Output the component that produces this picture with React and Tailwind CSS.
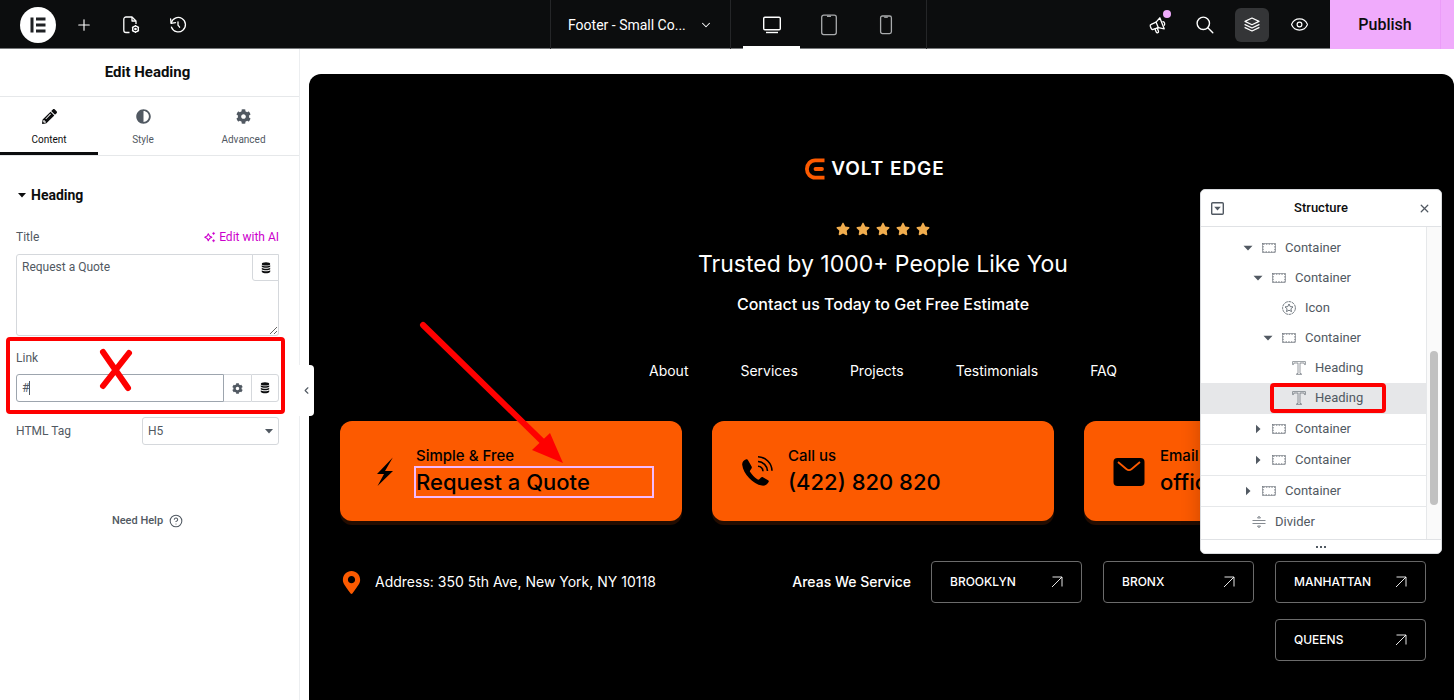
// ============================================
// Editor shell - top bar, widget panel, canvas and structure navigator
// ============================================

import { ChevronDown, ChevronLeft, CircleHelp, Eye, Plus, X } from 'lucide-react';
import { FaAdjust, FaCog, FaMapMarkerAlt, FaPencilAlt, FaStar } from 'react-icons/fa';

// ---------- Icons ----------

const PageSettingsIcon = () => (
  <svg width="20" height="20" viewBox="0 0 20 20" fill="none" stroke="currentColor" strokeWidth="1.3" strokeLinejoin="round">
    <path d="M8.5 17.5H5A2.2 2.2 0 0 1 2.8 15.300V4.200A2.200 2.200 0 0 1 5 2h6l4 4v3" />
    <path d="M11 2v4h4" />
    <circle cx="14.500" cy="14" r="2.900" />
    <circle cx="14.500" cy="14" r="0.700" />
    <path d="M14.500 10v1M14.500 17v1M11 12l1 .6M17 15.400l1 .6M11 16l1-.6M17 12.600l1-.6" />
  </svg>
);

const HistoryIcon = () => (
  <svg width="20" height="20" viewBox="0 0 20 20" fill="none" stroke="currentColor" strokeWidth="1.300" strokeLinejoin="round" strokeLinecap="round">
    <path d="M3.200 8.200a7.200 7.200 0 1 1 .3 4" />
    <path d="M2.600 3.800l.5 4.500 4.400-.6" />
    <path d="M10 6.800v3.400l1.600 2" />
  </svg>
);

const SearchIcon = () => (
  <svg width="20" height="20" viewBox="0 0 20 20" fill="none" stroke="currentColor" strokeWidth="1.400" strokeLinecap="round">
    <circle cx="8.300" cy="8.300" r="6.200" />
    <path d="M12.800 12.800l5 5" />
  </svg>
);

const MegaphoneIcon = () => (
  <svg width="20" height="20" viewBox="0 0 20 20" fill="none" stroke="currentColor" strokeWidth="1.3" strokeLinejoin="round" strokeLinecap="round">
    <path d="M11.800 2.800l4.400 11-5.800-1.100-5.300 1.700a1.500 1.500 0 0 1-1.900-.9l-.9-2.300a1.500 1.500 0 0 1 .9-1.900l4.900-2.100z" />
    <path d="M8.100 7.200l2.300 5.500M14.900 6.700a2.300 2.300 0 0 1 1.400 3.500M7 14l1.300 3.200a1.200 1.200 0 0 0 2.200-.9l-1.300-3.200" />
  </svg>
);

const LayersIcon = () => (
  <svg width="18" height="18" viewBox="0 0 18 18" fill="none" stroke="currentColor" strokeWidth="1.2" strokeLinejoin="round" strokeLinecap="round">
    <path d="M9 2l7 3.400-7 3.400-7-3.400z" />
    <path d="M2 8.600l7 3.400 7-3.400M2 11.600L9 15l7-3.400" />
  </svg>
);

const DesktopIcon = () => (
  <svg width="20" height="20" viewBox="0 0 20 20" fill="none" stroke="currentColor" strokeWidth="1.400">
    <rect x="1.700" y="2.200" width="16.600" height="12.600" rx="1.200" />
    <path d="M4 17.500h12" />
  </svg>
);

const TabletIcon = () => (
  <svg width="18" height="22" viewBox="0 0 18 22" fill="none" stroke="currentColor" strokeWidth="1.300">
    <rect x="1.700" y="1.200" width="14.600" height="19.400" rx="2" />
    <path d="M7 2.300h4" />
  </svg>
);

const MobileIcon = () => (
  <svg width="14" height="20" viewBox="0 0 14 20" fill="none" stroke="currentColor" strokeWidth="1.300">
    <rect x="1.600" y="1" width="10.800" height="17.600" rx="1.800" />
    <path d="M5.200 2.200h3.600" />
  </svg>
);

const DatabaseIcon = () => (
  <svg width="10" height="12" viewBox="0 0 10 12" fill="currentColor">
    <ellipse cx="5" cy="1.900" rx="4.200" ry="1.600" />
    <path d="M.8 3.300c1.500 1.300 6.900 1.300 8.400 0v1.500c-1.500 1.300-6.900 1.300-8.400 0zM.8 5.800c1.500 1.300 6.900 1.300 8.400 0v1.500c-1.500 1.300-6.900 1.300-8.400 0zM.8 8.300c1.500 1.300 6.900 1.300 8.400 0v1.600c-1.500 1.900-6.900 1.900-8.400 0z" />
  </svg>
);

const SparkleIcon = () => (
  <svg width="12" height="12" viewBox="0 0 12 12" fill="none" stroke="currentColor" strokeWidth="1.100" strokeLinejoin="round">
    <path d="M4.300 2.800L5.500 5l2.300 1.200-2.300 1.200-1.200 2.300-1.200-2.300L.8 6.200 3.100 5z" />
    <path d="M9.600.9l.5 1 1 .5-1 .5-.5 1-.5-1-1-.5 1-.5zM9.600 8.200l.5 1 1 .5-1 .5-.5 1-.5-1-1-.5 1-.5z" fill="currentColor" strokeWidth="0.300" />
  </svg>
);

const ContainerIcon = () => (
  <svg width="14" height="10" viewBox="0 0 14 10" fill="none" stroke="currentColor">
    <rect x="0.500" y="0.500" width="13" height="9" strokeWidth="0.500" />
    <rect x="1.200" y="1.200" width="11.600" height="7.600" strokeWidth="0.700" strokeDasharray="1.500 1.200" />
  </svg>
);

const HeadingIcon = () => (
  <svg width="14" height="14" viewBox="0 0 14 14" fill="none" stroke="currentColor" strokeWidth="0.600">
    <path d="M.6.6h12.800v3h-.8l-.6-1.600H8v10.400l1.500.5v.5h-5v-.5l1.500-.5V2H2L1.400 3.600H.6z" />
  </svg>
);

const StarCircleIcon = () => (
  <svg width="14" height="14" viewBox="0 0 14 14" fill="none" stroke="currentColor" strokeWidth="0.800" strokeLinejoin="round">
    <circle cx="7" cy="7" r="6.400" strokeDasharray="3 .6" />
    <path d="M7 3l1.200 2.600 2.800.3-2.100 1.900.6 2.800L7 9.200l-2.500 1.400.6-2.800L3 5.900l2.800-.3z" />
  </svg>
);

const DividerIcon = () => (
  <svg width="14" height="14" viewBox="0 0 14 14" fill="none" stroke="currentColor" strokeWidth="0.700">
    <path d="M.5 5.500h13M.5 8.500h13M5.500 3L7 1.200 8.500 3zM5.500 11L7 12.800 8.500 11z" />
  </svg>
);

const BoltIcon = () => (
  <svg width="32" height="32" viewBox="0 0 32 32" fill="currentColor">
    <path d="M23.800 2.500L8 19h7L8.500 31 24 16h-8z" />
  </svg>
);

const PhoneIcon = () => (
  <svg width="32" height="32" viewBox="0 0 32 32" fill="none">
    <path d="M5.200 4.300C3 5 .9 7 1.200 9.800c1 9.200 10.900 19.400 19.700 20.800 3 .4 5.300-1.200 6.700-3.600.5-.9.200-1.400-.5-1.800l-5.200-3c-.8-.5-1.300-.3-1.900.3l-1.700 1.700c-.7.6-1.300.5-2 .1-2.800-1.800-5.300-4.400-7.100-7.200-.4-.7-.5-1.200.1-1.900l1.200-1.800c.4-.6.5-1.200.1-1.900L6.900 4.900c-.4-.6-.9-.9-1.700-.6z" fill="currentColor" />
    <path d="M17 11.200a5.400 5.400 0 0 1 5 5M17 6.500a10 10 0 0 1 9.500 9.500M17 1.800A14.400 14.400 0 0 1 31 15.800" stroke="currentColor" strokeWidth="1.600" />
  </svg>
);

const MailIcon = () => (
  <svg width="32" height="32" viewBox="0 0 32 32" fill="none">
    <rect x="0.500" y="3" width="31" height="28" rx="4" fill="currentColor" />
    <path d="M5 7l8.300 7a4.300 4.300 0 0 0 5.400 0L27 7" stroke="#fc5a00" strokeWidth="1.800" />
  </svg>
);

const NorthEastIcon = () => (
  <svg width="12" height="12" viewBox="0 0 12 12" fill="none" stroke="currentColor" strokeWidth="0.900">
    <path d="M1 11L11 1M1.500 1H11v9.500" />
  </svg>
);

const VoltMark = () => (
  <svg width="20" height="22" viewBox="0 0 20 22" fill="none" stroke="#fc5a00" strokeWidth="3.800" strokeLinejoin="round">
    <path d="M19.500 2.300h-9.300a8.300 8.700 0 0 0 0 17.400h9.300" />
    <path d="M10.500 11h6.500" strokeLinecap="round" />
  </svg>
);

// ---------- Top bar ----------

const BarButton = ({ label, active, children }) => (
  <button
    aria-label={label}
    className={`relative flex h-[34px] w-[34px] items-center justify-center rounded-md text-white ${active ? 'bg-[#343537]' : ''}`}
  >
    {children}
  </button>
);

const DeviceButton = ({ label, active, children }) => (
  <button
    aria-label={label}
    className={`flex h-full w-[57px] items-center justify-center border-y-[3px] border-t-transparent ${
      active ? 'border-b-white text-white' : 'border-b-transparent text-[#a9abad]'
    }`}
  >
    {children}
  </button>
);

const TopBar = () => (
  <header className="grid h-[49px] shrink-0 grid-cols-[1fr_auto_527px] border-b border-[#77797b] bg-[#0c0d0e]">
    <div className="flex items-center gap-[13px] pl-5">
      <button aria-label="Menu" className="mr-[-2px] flex h-9 w-9 items-center justify-center rounded-full bg-white">
        <svg width="16" height="16" viewBox="0 0 16 16" fill="#1f2124">
          <path d="M.5.5h3v15h-3zM6 .5h9.500v3H6zM6 6.500h9.500v3H6zM6 12.500h9.500v3H6z" />
        </svg>
      </button>
      <BarButton label="Add element"><Plus size={18} strokeWidth={1.5} /></BarButton>
      <BarButton label="Site settings"><PageSettingsIcon /></BarButton>
      <BarButton label="History"><HistoryIcon /></BarButton>
    </div>

    <div className="flex border-x border-[#252628]">
      <button className="flex w-[180px] items-center justify-between border-r border-[#252628] px-[17px] text-sm text-white">
        Footer - Small Co...
        <ChevronDown size={14} strokeWidth={1.8} />
      </button>
      <div className="flex px-3">
        <DeviceButton label="Desktop" active><DesktopIcon /></DeviceButton>
        <DeviceButton label="Tablet"><TabletIcon /></DeviceButton>
        <DeviceButton label="Mobile"><MobileIcon /></DeviceButton>
      </div>
    </div>

    <div className="flex items-center justify-end">
      <div className="flex items-center gap-[13px] pr-3.5">
        <BarButton label="What's new">
          <MegaphoneIcon />
          <span className="absolute right-1 top-0.5 h-2 w-2 rounded-full bg-[#f0abfc]"></span>
        </BarButton>
        <BarButton label="Finder"><SearchIcon /></BarButton>
        <BarButton label="Structure" active><LayersIcon /></BarButton>
        <BarButton label="Preview"><Eye size={19} strokeWidth={1.5} /></BarButton>
      </div>
      <button className="h-[49px] w-[110px] self-start bg-[#f0abfc] text-base font-medium text-[#0c0d0e]">Publish</button>
      <button aria-label="Save options" className="h-[49px] w-3.5 self-start border-l border-[#eb9cf9] bg-[#f0abfc]"></button>
    </div>
  </header>
);

// ---------- Widget panel ----------

const PanelTab = ({ label, icon: Icon, active }) => (
  <button
    className={`flex flex-col items-center gap-2 border-b-[3px] pb-1 pt-3 text-[10px] leading-4 ${
      active ? 'border-[#0c0d0e] text-[#0c0d0e]' : 'border-transparent text-[#515962]'
    }`}
  >
    <Icon size={15} />
    {label}
  </button>
);

const EditPanel = () => (
  <aside className="relative z-10 w-[300px] shrink-0 border-r border-[#eceef0] bg-white text-[13px] text-[#515962]">
    <h1 className="border-b border-[#e6e8ea] py-3 pr-1 text-center text-[15px] font-bold leading-[23px] text-[#0c0d0e]">Edit Heading</h1>
    <div className="grid grid-cols-[98px_90px_1fr] border-b border-[#e6e8ea]">
      <PanelTab label="Content" icon={FaPencilAlt} active />
      <PanelTab label="Style" icon={FaAdjust} />
      <PanelTab label="Advanced" icon={FaCog} />
    </div>

    <div className="px-4 pt-[29px]">
      <button className="flex items-center gap-[5px] pl-0.5 text-sm font-bold leading-5 text-[#0c0d0e]">
        <svg width="8" height="5" viewBox="0 0 8 5" fill="currentColor"><path d="M0 0h8L4 4.500z" /></svg>
        Heading
      </button>
    </div>

    <div className="pl-4 pr-5 pt-[22px]">
      <div className="flex items-center justify-between leading-5">
        <label htmlFor="title" className="text-xs leading-5">Title</label>
        <button className="flex items-center gap-[3px] text-xs leading-5 text-[#cc00cc]">
          <SparkleIcon />
          Edit with AI
        </button>
      </div>
      <div className="relative mt-[7px]">
        <textarea
          id="title"
          defaultValue="Request a Quote"
          className="block h-[82px] w-full resize-y rounded-[3px] border border-[#d5d8dc] px-[5px] py-1 text-xs leading-4 outline-none"
        />
        <button aria-label="Dynamic title" className="absolute right-0 top-0 flex h-[27px] w-[27px] items-center justify-center rounded-bl-[3px] border border-[#d5d8dc] bg-white text-[#0c0d0e]">
          <DatabaseIcon />
        </button>
      </div>
    </div>

    <div className="relative pb-3 pl-4 pr-5 pt-3">
      <label htmlFor="link" className="block text-xs leading-5">Link</label>
      <div className="relative mt-1.5 flex h-7">
        <input
          id="link"
          defaultValue="#"
          className="min-w-0 flex-1 rounded-l-[3px] border border-[#9da5ae] px-[5px] text-xs outline-none"
        />
        {/* text cursor */}
        <span className="absolute left-[13px] top-[7px] h-3.5 w-px bg-[#515962]"></span>
        <button aria-label="Link options" className="flex w-[27px] items-center justify-center border-y border-[#d5d8dc]">
          <FaCog size={11} />
        </button>
        <button aria-label="Dynamic link" className="flex w-7 items-center justify-center rounded-r-[3px] border border-[#d5d8dc] text-[#0c0d0e]">
          <DatabaseIcon />
        </button>
      </div>
      {/* callout over the link field */}
      <div className="pointer-events-none absolute inset-x-1.5 bottom-0 top-px mr-2 rounded-sm border-4 border-[#fe0000]"></div>
      <svg className="pointer-events-none absolute left-[98px] top-3" width="36" height="44" viewBox="0 0 36 44" fill="none" stroke="#fe0000" strokeWidth="6" strokeLinecap="round">
        <path d="M5 4l25 36M31 5L5 38" />
      </svg>
    </div>

    <div className="flex items-center justify-between pl-4 pr-5 pt-[3px]">
      <label htmlFor="tag" className="text-xs">HTML Tag</label>
      <div className="relative w-[137px]">
        <select id="tag" defaultValue="H5" className="h-7 w-full appearance-none rounded-[3px] border border-[#d5d8dc] bg-white px-[5px] text-xs outline-none">
          <option>H5</option>
        </select>
        <svg className="pointer-events-none absolute right-1.5 top-3" width="8" height="5" viewBox="0 0 8 5" fill="currentColor"><path d="M0 0h8L4 4.500z" /></svg>
      </div>
    </div>

    <a href="#help" className="mt-[66px] flex items-center justify-center gap-1.5 pr-1 text-[11px] font-medium leading-5">
      Need Help
      <CircleHelp size={14} strokeWidth={1.8} />
    </a>

    <button aria-label="Hide panel" className="absolute -right-[15px] top-[316px] flex h-[51px] w-[15px] items-center justify-center rounded-r-sm bg-white">
      <ChevronLeft size={11} strokeWidth={2.5} />
    </button>
  </aside>
);

// ---------- Canvas ----------

const navLinks = ['About', 'Services', 'Projects', 'Testimonials', 'FAQ'];
const areas = ['BROOKLYN', 'BRONX', 'MANHATTAN', 'QUEENS'];

const ContactCard = ({ icon, label, value, selected, children }) => (
  <div className="relative flex h-[100px] min-w-0 items-center gap-[15px] rounded-xl bg-[#fc5a00] pl-[29px] pr-[30px] text-black shadow-[0_4px_0_#230c00]">
    <span className="shrink-0">{icon}</span>
    <div className="flex min-w-0 flex-1 flex-col gap-0.5">
      <p className="text-[15px] font-medium leading-5">{label}</p>
      <h5 className={`whitespace-nowrap text-[22px] font-medium leading-7 ${selected ? 'outline-2 outline-[#f3bafd]' : ''}`}>{value}</h5>
    </div>
    {children}
  </div>
);

const Canvas = () => (
  <main className="min-w-0 flex-1 bg-white pl-[9px] pt-[25px]">
    <div className="flex h-full flex-col items-center rounded-t-xl bg-black pl-[31px] pr-7 pt-[84px] font-['Inter',sans-serif] text-white">
      <div className="flex items-center gap-1.5 pr-4 text-[19px] font-semibold leading-[22px] tracking-wider">
        <VoltMark />
        VOLT EDGE
      </div>
      <div className="mt-[42px] flex gap-1.5 text-[#f0ad4e]">
        {[0, 1, 2, 3, 4].map(i => <FaStar key={i} size={14} />)}
      </div>
      <h2 className="mt-3 text-[23px] leading-8">Trusted by 1000+ People Like You</h2>
      <p className="mt-3 text-base font-medium leading-6">Contact us Today to Get Free Estimate</p>
      <nav className="mt-[43px] flex gap-[52px] text-sm leading-6">
        {navLinks.map(name => <a key={name} href={`#${name}`}>{name}</a>)}
      </nav>

      <div className="mt-[38px] grid w-full grid-cols-3 gap-[30px]">
        <ContactCard icon={<BoltIcon />} label="Simple & Free" value="Request a Quote" selected>
          <svg className="pointer-events-none absolute -top-[101px] left-[78px]" width="150" height="146" viewBox="0 0 150 146">
            <path d="M5 5l122 119" stroke="#fe0000" strokeWidth="6" strokeLinecap="round" />
            <path d="M145 143l-31-13 18-17z" fill="#fe0000" />
          </svg>
        </ContactCard>
        <ContactCard icon={<PhoneIcon />} label="Call us" value="(422) 820 820" />
        <ContactCard icon={<MailIcon />} label="Email us" value="office@" />
      </div>

      <div className="mt-10 flex w-full justify-between">
        <p className="flex h-[42px] items-center gap-3 text-sm">
          <FaMapMarkerAlt size={23} color="#fc5a00" />
          Address: 350 5th Ave, New York, NY 10118
        </p>
        <div className="flex gap-5">
          <p className="text-sm font-medium leading-[42px]">Areas We Service</p>
          <div className="flex w-[495px] flex-wrap justify-end gap-x-[21px] gap-y-4">
            {areas.map(area => (
              <a key={area} href={`#${area}`} className="flex h-[42px] w-[151px] items-center justify-between rounded border border-[#6b6b6b] px-[18px] text-xs font-medium">
                {area}
                <NorthEastIcon />
              </a>
            ))}
          </div>
        </div>
      </div>
    </div>
  </main>
);

// ---------- Structure navigator ----------

const tree = [
  { icon: <ContainerIcon />, label: 'Container', pad: 'pl-[42px]', arrow: 'open' },
  { icon: <ContainerIcon />, label: 'Container', pad: 'pl-[52px]', arrow: 'open' },
  { icon: <StarCircleIcon />, label: 'Icon', pad: 'pl-[62px]' },
  { icon: <ContainerIcon />, label: 'Container', pad: 'pl-[62px]', arrow: 'open' },
  { icon: <HeadingIcon />, label: 'Heading', pad: 'pl-[72px]' },
  { icon: <HeadingIcon />, label: 'Heading', pad: 'pl-[72px]', selected: true },
  { icon: <ContainerIcon />, label: 'Container', pad: 'pl-[52px]', arrow: 'closed' },
  { icon: <ContainerIcon />, label: 'Container', pad: 'pl-[52px]', arrow: 'closed' },
  { icon: <ContainerIcon />, label: 'Container', pad: 'pl-[42px]', arrow: 'closed' },
  { icon: <DividerIcon />, label: 'Divider', pad: 'pl-[32px]' }
];

const TreeRow = ({ item }) => (
  <li
    className={`relative ${item.selected ? 'border-b border-[#e6e7e9] bg-[#e6e7e9]' : ''} ${
      item.arrow === 'closed' ? 'border-b border-[#e6e8ea]' : ''
    }`}
  >
    <button className={`flex h-[30px] w-full items-center gap-[9px] ${item.pad}`}>
      <span className="flex w-[10px] justify-center">
        {item.arrow && (
          <svg width="10" height="10" viewBox="0 0 10 10" fill="currentColor">
            {item.arrow === 'open' ? <path d="M.5 2.800h9L5 7.500z" /> : <path d="M3 .8v8.400L7.500 5z" />}
          </svg>
        )}
      </span>
      {item.icon}
      {item.label}
    </button>
    {item.selected && (
      <span className="pointer-events-none absolute inset-y-0 left-[69px] w-[116px] rounded-sm border-4 border-[#fe0000]"></span>
    )}
  </li>
);

const StructurePanel = () => (
  <section className="absolute right-3 top-[140px] z-20 w-[242px] overflow-hidden rounded-[5px] border border-[#d9dbde] bg-white text-[13px] text-[#515962] shadow-[0_2px_20px_rgba(0,0,0,0.2)]">
    <div className="flex h-[37px] items-center justify-between border-b border-[#e0e2e5] px-2.5">
      <button aria-label="Expand all">
        <svg width="13" height="13" viewBox="0 0 13 13" fill="none">
          <rect x="0.700" y="0.700" width="11.600" height="11.600" rx="1" stroke="currentColor" strokeWidth="1.400" />
          <path d="M3.200 4.800h6.600L6.500 8.600z" fill="currentColor" />
        </svg>
      </button>
      <h2 className="font-medium text-[#0c0d0e]">Structure</h2>
      <button aria-label="Close"><X size={13} strokeWidth={2.400} /></button>
    </div>
    <div className="flex">
      <ul className="flex-1 pt-1.5 pb-0.5">
        {tree.map((item, i) => <TreeRow key={i} item={item} />)}
      </ul>
      <div className="w-[15px] border-l border-[#e6e8ea] bg-[#fafafa] px-[3px] pt-[124px]">
        <div className="h-[154px] rounded-full bg-[#c1c1c1]"></div>
      </div>
    </div>
    <div className="flex h-3.5 items-center justify-center border-t border-[#e0e2e5]">
      <svg width="10" height="2" viewBox="0 0 10 2" fill="currentColor">
        <path d="M0 0h2v2H0zM4 0h2v2H4zM8 0h2v2H8z" />
      </svg>
    </div>
  </section>
);

const App = () => (
  <div className="flex h-screen flex-col overflow-hidden bg-white font-['Roboto',sans-serif]">
    <TopBar />
    <div className="relative flex min-h-0 flex-1">
      <EditPanel />
      <Canvas />
      <StructurePanel />
    </div>
  </div>
);

export default App;
